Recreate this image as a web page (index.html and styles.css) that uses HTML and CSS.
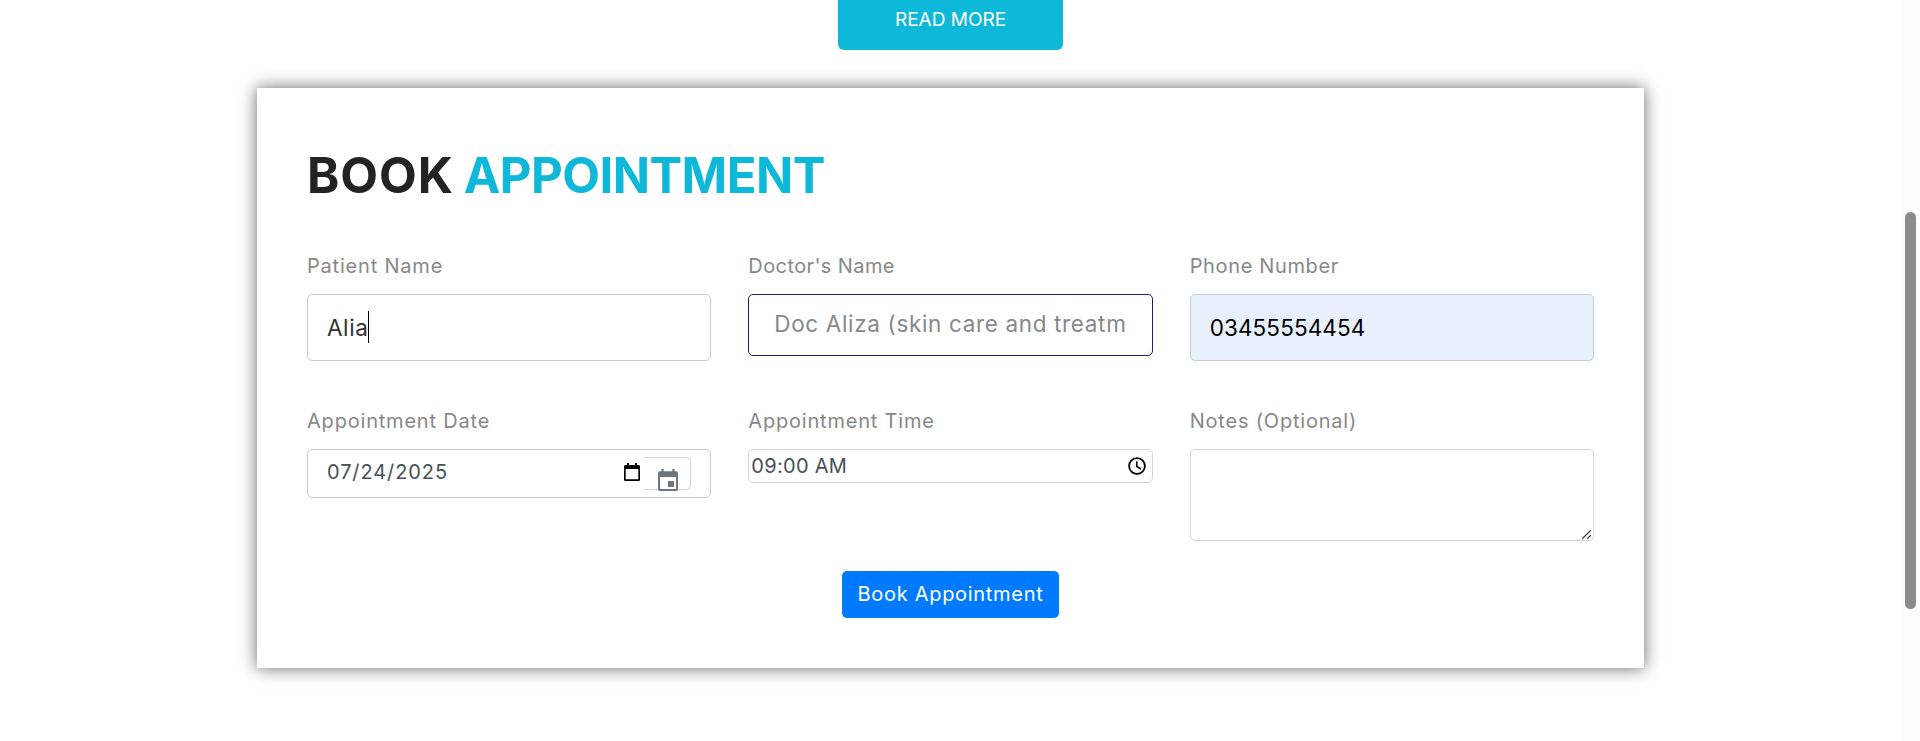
FILE: index.html
```
<!DOCTYPE html>
<html lang="en">
<head>
<meta charset="utf-8">
<title>Book Appointment</title>
<link rel="stylesheet" href="styles.css">
</head>
<body>
<div class="page">
  <main class="content">
    <a class="read-more">READ MORE</a>
    <form class="card">
      <h2 class="title"><span class="title-dark">BOOK</span><span class="title-accent">APPOINTMENT</span></h2>
      <div class="grid">
        <div class="field">
          <label class="label">Patient Name</label>
          <div class="control control-lg"><span class="name">Alia</span><span class="caret"></span></div>
        </div>
        <div class="field">
          <label class="label label-tight">Doctor's Name</label>
          <div class="control control-select"><span class="doctor">Doc Aliza (skin care and treatm</span></div>
        </div>
        <div class="field">
          <label class="label label-phone">Phone Number</label>
          <div class="control control-lg autofilled"><span class="phone">03455554454</span></div>
        </div>
        <div class="field">
          <label class="label">Appointment Date</label>
          <div class="control control-date">
            <span class="date">07/24/2025</span>
            <svg class="date-native" width="16" height="18" viewBox="0 0 16 18"><path fill="#000" fill-rule="evenodd" d="M3 0h2v2h6V0h2v2h1.500Q16 2 16 3.500V16.500Q16 18 14.500 18H1.500Q0 18 0 16.500V3.500Q0 2 1.500 2H3ZM1.700 6v10.300h12.600V6Z"/></svg>
            <span class="addon">
              <svg class="addon-icon" width="20" height="22" viewBox="0 0 20 22"><path fill="#6c757d" fill-rule="evenodd" d="M3.500 0h2.200v2.200h8.600V0h2.200v2.200H18q2 0 2 2V20q0 2-2 2H2q-2 0-2-2V4.200q0-2 2-2h1.500ZM2 8v12h16V8Z"/><path fill="#6c757d" d="M10 12h6v6h-6z"/></svg>
            </span>
          </div>
        </div>
        <div class="field">
          <label class="label">Appointment Time</label>
          <div class="control control-time">
            <span class="time">09:00 AM</span>
            <svg width="18" height="18" viewBox="0 0 18 18" fill="none" stroke="#000"><circle cx="9" cy="9" r="7.900" stroke-width="1.800"/><path stroke-width="1.500" d="M8.800 4.300V9.500L13 12"/></svg>
          </div>
        </div>
        <div class="field">
          <label class="label">Notes (Optional)</label>
          <div class="control control-notes">
            <svg width="9" height="9" viewBox="0 0 9 9" stroke="#444" stroke-width="1.300"><path d="M.3 8.700L8.700.3M5.300 8.700L8.700 5.300"/></svg>
          </div>
        </div>
      </div>
      <button class="submit" type="button">Book Appointment</button>
    </form>
  </main>
  <div class="scrollbar"><div class="thumb"></div></div>
</div>
</body>
</html>
```
FILE: styles.css
```
* { box-sizing: border-box; }
body {
  margin: 0;
  height: 741px;
  overflow: hidden;
  background: #fff;
  font: 20px/30px "Inter", "Open Sans", sans-serif;
}
.page { display: flex; height: 741px; }
.content { flex: 1; display: flex; flex-direction: column; align-items: center; }
.scrollbar { width: 19px; padding: 212px 0 0 4px; background: #fcfcfc; }
.thumb { width: 11px; height: 397px; border-radius: 6px; background: #8b8b8b; }

.read-more {
  width: 225px;
  height: 50px;
  border-radius: 0 0 6px 6px;
  background: #0db8d9;
  color: #fff;
  font-size: 19px;
  line-height: 39px;
  text-align: center;
}
.card {
  display: flex;
  flex-direction: column;
  width: 1387px;
  height: 580px;
  margin-top: 38px;
  padding: 59px 50px 0;
  background: #fff;
  box-shadow: 0 0 16px rgba(0, 0, 0, 0.6);
}
.title {
  display: flex;
  gap: 10px;
  margin: 0 0 46px;
  font-size: 49px;
  font-weight: 700;
  line-height: 58px;
}
.title-dark { color: #232323; letter-spacing: 0.9px; }
.title-accent { color: #0db8d9; letter-spacing: -0.55px; }

.grid { display: grid; grid-template-columns: repeat(3, 1fr); gap: 45px 37px; }
.field { display: flex; flex-direction: column; gap: 13px; min-width: 0; }
.label { color: #888; letter-spacing: 0.8px; white-space: nowrap; }
.label-tight { letter-spacing: 0.4px; }
.label-phone { letter-spacing: 0.65px; }

.control {
  display: flex;
  border: 1px solid #ced4da;
  border-radius: 5px;
  white-space: nowrap;
}
.control-lg {
  height: 67px;
  padding-left: 19px;
  align-items: center;
  border-color: #ccc;
  color: #333;
  font-size: 22.5px;
  line-height: 65px;
}
.name { letter-spacing: 0.6px; }
.caret { width: 1px; height: 32px; margin-bottom: 1px; background: #000; }
.autofilled { background: #e8f0fe; color: #000; }
.phone { letter-spacing: 0.1px; }
.control-select {
  height: 62px;
  padding-left: 25px;
  border-color: #2a1a7d;
  color: #888;
  font-size: 22.5px;
  line-height: 58px;
}
.doctor { letter-spacing: 0.65px; }

.control-date {
  height: 49px;
  padding: 0 19px;
  border-color: #ccc;
  color: #495057;
  line-height: 45px;
}
.date { letter-spacing: 0.9px; }
.date-native { margin: 13px 4px 0 auto; }
.addon {
  display: flex;
  width: 47px;
  height: 33px;
  margin-top: 7px;
  padding: 11px 0 0 14px;
  border: 1px solid #ced4da;
  border-left: 0;
  border-radius: 0 5px 5px 0;
}
.addon-icon { flex: none; }
.control-time {
  height: 34px;
  align-items: center;
  justify-content: space-between;
  padding: 0 6px 0 2px;
  color: #495057;
  line-height: 32px;
}
.time { letter-spacing: 0.3px; }
.control-notes {
  height: 92px;
  align-items: flex-end;
  justify-content: flex-end;
  padding: 0 2px 1px 0;
}
.submit {
  align-self: center;
  width: 217px;
  height: 47px;
  margin-top: 30px;
  padding: 0 0 1px;
  border: 0;
  border-radius: 5px;
  background: #007bff;
  color: #fff;
  font: inherit;
  line-height: 44px;
  letter-spacing: 0.7px;
  white-space: nowrap;
}
```
